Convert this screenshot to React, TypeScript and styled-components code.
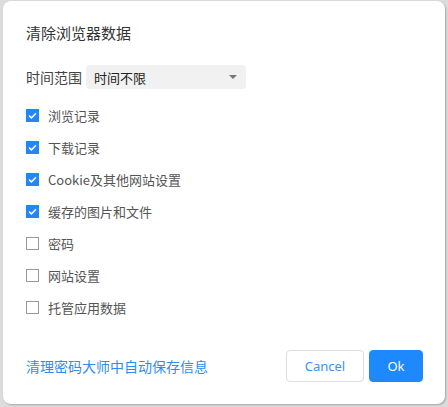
import React, { useState } from 'react';
import styled, { createGlobalStyle } from 'styled-components';

const GlobalStyle = createGlobalStyle`
  html, body {
    margin: 0;
    padding: 0;
    background: #dcdcdc;
    font-family: 'Noto Sans CJK SC', 'Noto Sans', sans-serif;
  }
`;

const Backdrop = styled.div`
  width: 448px;
  height: 407px;
  padding: 1px 3px 0 3px;
  box-sizing: border-box;
  background: #dcdcdc;
  overflow: hidden;
`;

const Dialog = styled.div`
  width: 442px;
  height: 403px;
  background: #fff;
  border-radius: 8px;
  box-shadow: 1px 1px 2px rgba(0, 0, 0, 0.25);
  box-sizing: border-box;
  padding: 22px 22px 22px 23px;
  display: flex;
  flex-direction: column;
  color: #333;
`;

const Title = styled.div`
  font-size: 15px;
  line-height: 20px;
  color: #333;
`;

const RangeRow = styled.div`
  margin-top: 22px;
  display: flex;
  align-items: center;
  gap: 4px;
`;

const RangeLabel = styled.span`
  font-size: 14px;
  color: #444;
`;

const Select = styled.div`
  width: 160px;
  height: 24px;
  border-radius: 4px;
  background: #f1f1f1;
  display: flex;
  align-items: center;
  justify-content: space-between;
  padding: 0 9px 0 8px;
  box-sizing: border-box;
  font-size: 13px;
  color: #222;
`;

const Caret = styled.span`
  width: 0;
  height: 0;
  border-left: 4px solid transparent;
  border-right: 4px solid transparent;
  border-top: 4px solid #777;
`;

const List = styled.div`
  margin-top: 10px;
  display: flex;
  flex-direction: column;
`;

const Row = styled.label`
  height: 32px;
  display: flex;
  align-items: center;
  gap: 9px;
  font-size: 13px;
  color: #555;
  cursor: pointer;
`;

const Box = styled.span<{ $on: boolean }>`
  width: 13px;
  height: 13px;
  box-sizing: border-box;
  background: ${(p) => (p.$on ? '#2187f7' : '#fff')};
  border: 1px solid ${(p) => (p.$on ? '#2187f7' : '#999')};
  display: flex;
  align-items: center;
  justify-content: center;
`;

const Footer = styled.div`
  margin-top: auto;
  display: flex;
  align-items: center;
`;

const Link = styled.a`
  font-size: 14px;
  color: #2c8df4;
  text-decoration: none;
  line-height: 32px;
  margin-right: auto;
  cursor: pointer;
`;

const Button = styled.button<{ $primary?: boolean }>`
  height: 32px;
  border-radius: 4px;
  font-family: 'Noto Sans', sans-serif;
  font-size: 13px;
  box-sizing: border-box;
  cursor: pointer;
  border: 1px solid ${(p) => (p.$primary ? '#1e88fd' : '#ddd')};
  background: ${(p) => (p.$primary ? '#1e88fd' : '#fff')};
  color: ${(p) => (p.$primary ? '#fff' : '#3a93f0')};
  width: ${(p) => (p.$primary ? '54px' : '78px')};
  margin-left: ${(p) => (p.$primary ? '5px' : '0')};
`;

const Check = () => (
  <svg width="9" height="7" viewBox="0 0 9 7">
    <path d="M1 3.5 L3.4 5.8 L8 1.2" fill="none" stroke="#fff" strokeWidth="1.6" />
  </svg>
);

const initial = [
  { label: '浏览记录', on: true },
  { label: '下载记录', on: true },
  { label: 'Cookie及其他网站设置', on: true },
  { label: '缓存的图片和文件', on: true },
  { label: '密码', on: false },
  { label: '网站设置', on: false },
  { label: '托管应用数据', on: false },
];

export default function App() {
  const [items, setItems] = useState(initial);
  const toggle = (i: number) =>
    setItems((prev) => prev.map((it, j) => (j === i ? { ...it, on: !it.on } : it)));

  return (
    <>
      <GlobalStyle />
      <Backdrop>
        <Dialog>
          <Title>清除浏览器数据</Title>
          <RangeRow>
            <RangeLabel>时间范围</RangeLabel>
            <Select>
              时间不限
              <Caret />
            </Select>
          </RangeRow>
          <List>
            {items.map((it, i) => (
              <Row key={it.label} onClick={() => toggle(i)}>
                <Box $on={it.on}>{it.on && <Check />}</Box>
                {it.label}
              </Row>
            ))}
          </List>
          <Footer>
            <Link>清理密码大师中自动保存信息</Link>
            <Button>Cancel</Button>
            <Button $primary>Ok</Button>
          </Footer>
        </Dialog>
      </Backdrop>
    </>
  );
}
